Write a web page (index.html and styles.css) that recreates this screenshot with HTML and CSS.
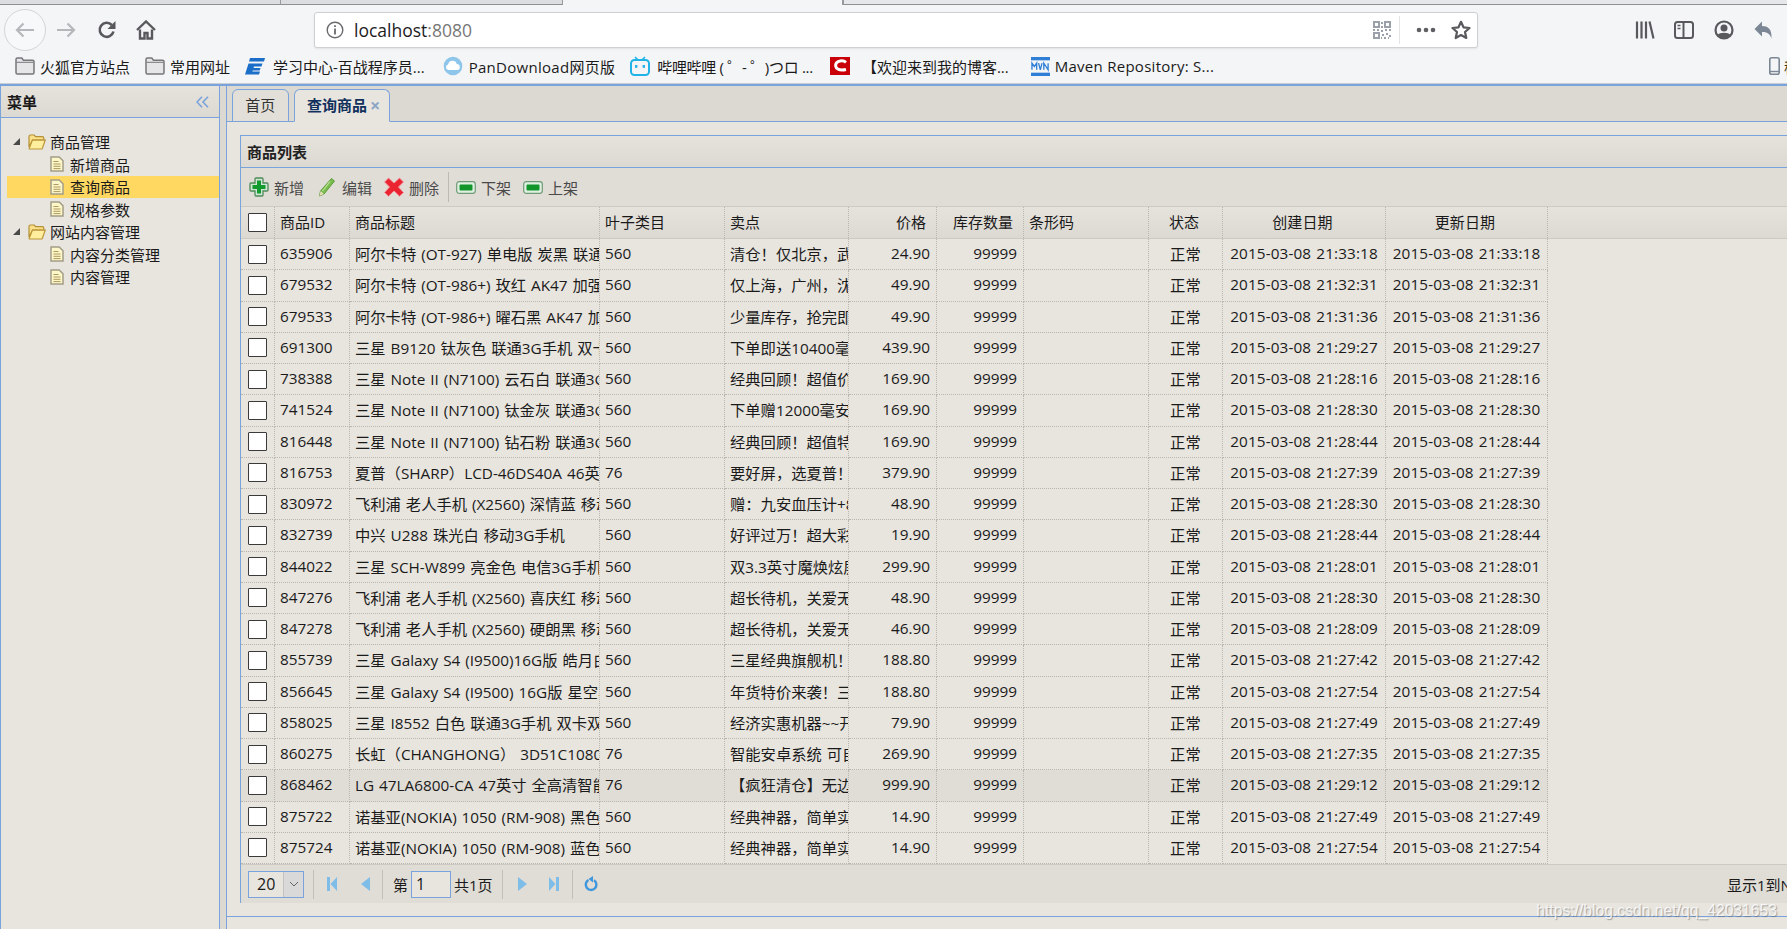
FILE: index.html
```html
<!DOCTYPE html>
<html lang="zh-CN">
<head>
<meta charset="utf-8">
<title>商品管理</title>
<link rel="stylesheet" href="styles.css">
</head>
<body>
<svg class="sprite" aria-hidden="true">
  <symbol id="i-folder-b" viewBox="0 0 20 18"><path d="M1 4V2.500C1 1.700 1.600 1 2.400 1h4.400l1.600 2.200h9.200c.8 0 1.400.6 1.400 1.400v10.900c0 .8-.6 1.500-1.400 1.500H2.400c-.8 0-1.400-.7-1.400-1.500z" fill="#e6e6e8" stroke="#77777b" stroke-width="1.500"/><path d="M1.500 5.300h17" stroke="#77777b"/></symbol>
  <symbol id="i-open" viewBox="0 0 18 16"><path d="M1 13V2.600C1 1.700 1.600 1 2.500 1h3.700l1.400 1.600h6.700c.9 0 1.500.7 1.500 1.500V6H4.600z" fill="#fbe08a" stroke="#b48f35" stroke-width="1.200"/><path d="M1.200 14.200 4.400 6.200h12.800l-2.800 8c-.2.5-.6.8-1.100.8H2c-.6 0-1-.4-.8-.8z" fill="#ffee9e" stroke="#bd9638" stroke-width="1.200"/></symbol>
  <symbol id="i-doc" viewBox="0 0 14 16"><path d="M1 1h8.200L13 4.800V15H1z" fill="#fdf6c8" stroke="#a39d88" stroke-width="1.500"/><path d="M3.500 5.500h5M3.500 8h7M3.500 10.300h7M3.500 12.600h7" stroke="#ad9a5c"/></symbol>
  <symbol id="i-add" viewBox="0 0 20 20"><path d="M7 1h6c.6 0 1 .4 1 1v4h4c.6 0 1 .4 1 1v6c0 .6-.4 1-1 1h-4v4c0 .6-.4 1-1 1H7c-.6 0-1-.4-1-1v-4H2c-.6 0-1-.4-1-1V7c0-.6.4-1 1-1h4V2c0-.6.4-1 1-1z" fill="#cfe6d2" stroke="#4f8a5a" stroke-width="1.300"/><path d="M8 3.500h4V8h4.500v4H12v4.500H8V12H3.500V8H8z" fill="#129a2e"/></symbol>
  <symbol id="i-edit" viewBox="0 0 18 20"><path d="M13.500 1.500 16.500 4 6 17 1.500 19 2.500 14z" fill="#79bd4f" stroke="#5c9a3a"/><path d="M2.500 14 6 17 1.500 19z" fill="#e5dcb8"/><path d="M12 4.500 4.500 14" stroke="#bfe39a" stroke-width="1.200"/></symbol>
  <symbol id="i-del" viewBox="0 0 20 20"><path d="M4.500 1 10 6 15.500 1 19.500 5 14.500 10 19.500 15.500 15.500 19.300 10 14 4.500 19.300.5 15.500 5.500 10 .5 5z" fill="#ea2430" stroke="#f29aa0" stroke-linejoin="round"/></symbol>
  <symbol id="i-green" viewBox="0 0 20 13"><rect x=".7" y=".7" width="18.600" height="11.600" rx="2.500" fill="#dff0e2" stroke="#6f9a76" stroke-width="1.200"/><rect x="3.500" y="3.500" width="13" height="6" rx="1" fill="#12952b"/></symbol>
  <symbol id="i-first" viewBox="0 0 10 14"><path d="M0 0h3v14H0zM10 0v14L3.500 7z" fill="#7fbde9"/></symbol>
  <symbol id="i-prev" viewBox="0 0 9 14"><path d="M9 0v14L0 7z" fill="#7fbde9"/></symbol>
  <symbol id="i-next" viewBox="0 0 9 14"><path d="M0 0v14l9-7z" fill="#7fbde9"/></symbol>
  <symbol id="i-last" viewBox="0 0 10 14"><path d="M7 0h3v14H7zM0 0v14l6.500-7z" fill="#7fbde9"/></symbol>
</svg>

<header class="browser">
  <div class="tabstrip">
    <div class="btab"></div>
    <div class="btab"></div>
    <div class="btab btab-active"></div>
    <div class="btab-rest"></div>
  </div>
  <nav class="navbar">
    <div class="back-circle">
      <svg class="ico20" viewBox="0 0 20 16"><path d="M19 8H2M8.500 1.500 2 8l6.500 6.500" fill="none" stroke="#b6b7ba" stroke-width="2.200"/></svg>
    </div>
    <svg class="ico20 nav-fwd" viewBox="0 0 20 16"><path d="M1 8h17M11.500 1.500 18 8l-6.500 6.500" fill="none" stroke="#b6b7ba" stroke-width="2.200"/></svg>
    <svg class="ico20 nav-reload" viewBox="0 0 20 20"><path d="M16.500 11.500A7 7 0 1 1 14.800 5" fill="none" stroke="#59595d" stroke-width="2.600"/><path d="M18.500 1v8h-8z" fill="#59595d"/></svg>
    <svg class="ico20 nav-home" viewBox="0 0 20 20"><path d="M1 10 10 1.500 19 10" fill="none" stroke="#59595d" stroke-width="2.400"/><path d="M4 9.500V18.500h4.500V13h3v5.500H16V9.500" fill="none" stroke="#59595d" stroke-width="2.400"/></svg>
    <div class="urlbar">
      <svg class="url-info" viewBox="0 0 18 18"><circle cx="9" cy="9" r="7.800" fill="none" stroke="#6a6a6e" stroke-width="1.400"/><path d="M9 7.500V13.500M9 4.200v1.800" stroke="#6a6a6e" stroke-width="1.800"/></svg>
      <span class="url-text">localhost<span class="url-port">:8080</span></span>
      <svg class="url-qr" viewBox="0 0 18 18"><path d="M0 0h7v7H0zM2 2v3h3V2zM11 0h7v7h-7zM13 2v3h3V2zM0 11h7v7H0zM2 13v3h3v-3z" fill="#9aa1ab" fill-rule="evenodd"/><path d="M8 1h2v2H8zM8 5h2v2H8zM0 8h2v2H0zM4 8h2v2H4zM8 9h2v2H8zM12 8h2v2h-2zM16 8h2v2h-2zM9 13h2v2H9zM13 12h2v2h-2zM16 14h2v2h-2zM11 16h2v2h-2zM8 16h1v2H8zM15 16h1v2h-1z" fill="#9aa1ab"/></svg>
      <span class="url-sep"></span>
      <svg class="url-dots" viewBox="0 0 20 6"><circle cx="3" cy="3" r="2.300" fill="#5f5f63"/><circle cx="10" cy="3" r="2.300" fill="#5f5f63"/><circle cx="17" cy="3" r="2.300" fill="#5f5f63"/></svg>
      <svg class="ico20 url-star" viewBox="0 0 20 20"><path d="M10 1.800 12.500 7.300 18.500 8 14 12 15.300 18 10 15 4.700 18 6 12 1.500 8 7.500 7.300z" fill="none" stroke="#59595d" stroke-width="2.200" stroke-linejoin="round"/></svg>
    </div>
    <div class="nav-right">
      <svg class="ico20" viewBox="0 0 20 20"><path d="M2 1.500v17M6.500 1.500v17M11 1.500v17M14.500 1.500l4 17" fill="none" stroke="#59595d" stroke-width="2.200"/></svg>
      <svg class="ico20" viewBox="0 0 20 20"><rect x="1" y="2" width="18" height="16" rx="2.500" fill="none" stroke="#59595d" stroke-width="2"/><path d="M9.500 2v16" stroke="#59595d" stroke-width="2"/><path d="M3.500 5.500h3M3.500 8.500h3" stroke="#59595d" stroke-width="1.400"/></svg>
      <svg class="ico20" viewBox="0 0 20 20"><circle cx="10" cy="10" r="8.500" fill="none" stroke="#59595d" stroke-width="2.200"/><circle cx="10" cy="8" r="3.500" fill="#59595d"/><path d="M3.500 15c2-3 11-3 13 0l-3 3h-7z" fill="#59595d"/></svg>
      <svg class="ico20" viewBox="0 0 20 20"><path d="M9 1.500V6C15 6 19 9 18.500 18.500 17 13.500 14 12 9 12v4.500L1.500 9z" fill="#7b8794"/></svg>
    </div>
  </nav>
  <div class="bookmarks">
    <a class="bm bm-1"><svg class="bm-ico"><use href="#i-folder-b"/></svg>火狐官方站点</a>
    <a class="bm bm-2"><svg class="bm-ico"><use href="#i-folder-b"/></svg>常用网址</a>
    <a class="bm bm-3"><svg class="bm-ico" viewBox="0 0 20 18"><path d="M5 1h15l-1 3.500H4zM3.500 6.500h14l-1 3H9l-.5 1.500h7l-.8 2.500H7.800L7.300 14.500H15L14 17.500H0z" fill="#1b6fc9"/></svg>学习中心-百战程序员...</a>
    <a class="bm bm-4"><svg class="bm-ico" viewBox="0 0 20 20"><circle cx="10" cy="10" r="9.300" fill="#8ec5ea"/><path d="M5.500 14a2.800 2.800 0 0 1-.4-5.500 4.500 4.500 0 0 1 8.700-.6A3.100 3.100 0 0 1 14.500 14z" fill="#fff"/></svg>PanDownload网页版</a>
    <a class="bm bm-5"><svg class="bm-ico" viewBox="0 0 20 20"><path d="M5 1l3 3M15 1l-3 3" stroke="#1fb3e8" stroke-width="1.600"/><rect x="1" y="4" width="18" height="15" rx="3.500" fill="none" stroke="#1fb3e8" stroke-width="2"/><rect x="5" y="9" width="2.400" height="2.800" fill="#1fb3e8"/><rect x="12.600" y="9" width="2.400" height="2.800" fill="#1fb3e8"/></svg>哔哩哔哩 ( ゜- ゜)つロ ...</a>
    <a class="bm bm-6"><svg class="bm-ico" viewBox="0 0 20 18"><rect width="20" height="18" fill="#c90008"/><path d="M16 5.300C14.500 4 12 3.500 10 4c-3.200.7-4.600 3-4.300 5.300.4 2.700 3.600 4.700 10.300 3.200" fill="none" stroke="#fff" stroke-width="3"/></svg>【欢迎来到我的博客...</a>
    <a class="bm bm-7"><svg class="bm-ico" viewBox="0 0 20 20"><rect y="0" width="20" height="3.500" fill="#2f7fd6"/><rect y="16.500" width="20" height="3.500" fill="#2f7fd6"/><path d="M1 13.500V6.500L3.500 10 6 6.500v7M8 6.500l1.800 7 1.800-7M13.500 13.500v-7l4.500 7v-7" fill="none" stroke="#2f7fd6" stroke-width="1.400"/></svg>Maven Repository: S...</a>
    <a class="bm bm-phone"><svg class="phone-ico" viewBox="0 0 11 18"><rect x=".8" y=".8" width="9.400" height="16.400" rx="1.800" fill="none" stroke="#7b8794" stroke-width="1.600"/><path d="M1 14.500h9" stroke="#7b8794" stroke-width="1.400"/></svg><span class="bm-move">移</span></a>
  </div>
</header>

<div class="app">
  <aside class="sidebar">
    <div class="side-head">
      <span class="side-title">菜单</span>
      <svg class="side-collapse" viewBox="0 0 13 12"><path d="M6 .7 1 6l5 5.300M12 .7 7 6l5 5.300" fill="none" stroke="#7aa3dc" stroke-width="1.600"/></svg>
    </div>
    <ul class="tree">
      <li class="node"><i class="arrow"></i><svg class="folder"><use href="#i-open"/></svg><span class="node-text">商品管理</span></li>
      <li class="leaf"><svg class="doc"><use href="#i-doc"/></svg><span class="leaf-text">新增商品</span></li>
      <li class="leaf leaf-selected"><svg class="doc"><use href="#i-doc"/></svg><span class="leaf-text">查询商品</span></li>
      <li class="leaf"><svg class="doc"><use href="#i-doc"/></svg><span class="leaf-text">规格参数</span></li>
      <li class="node"><i class="arrow"></i><svg class="folder"><use href="#i-open"/></svg><span class="node-text">网站内容管理</span></li>
      <li class="leaf"><svg class="doc"><use href="#i-doc"/></svg><span class="leaf-text">内容分类管理</span></li>
      <li class="leaf"><svg class="doc"><use href="#i-doc"/></svg><span class="leaf-text">内容管理</span></li>
    </ul>
  </aside>
  <div class="splitter"></div>
  <main class="main">
    <div class="tabbar">
      <div class="tab">首页</div>
      <div class="tab tab-active"><span>查询商品</span><span class="tab-close">×</span></div>
    </div>
    <div class="tabbody">
      <section class="panel">
        <div class="panel-head">商品列表</div>
        <div class="toolbar">
          <button class="tool tool-add"><svg class="t-ico"><use href="#i-add"/></svg>新增</button>
          <button class="tool tool-edit"><svg class="t-ico t-edit"><use href="#i-edit"/></svg>编辑</button>
          <button class="tool tool-del"><svg class="t-ico"><use href="#i-del"/></svg>删除</button>
          <span class="tool-sep"></span>
          <button class="tool tool-off"><svg class="t-ico t-green"><use href="#i-green"/></svg>下架</button>
          <button class="tool tool-on"><svg class="t-ico t-green"><use href="#i-green"/></svg>上架</button>
        </div>
        <div class="grid-head">
          <table class="grid">
            <colgroup><col class="c-ck"><col class="c-id"><col class="c-title"><col class="c-cat"><col class="c-sell"><col class="c-price"><col class="c-num"><col class="c-bar"><col class="c-st"><col class="c-date"><col class="c-date2"></colgroup>
            <tr><th class="ck"><input type="checkbox"></th><th>商品ID</th><th>商品标题</th><th>叶子类目</th><th>卖点</th><th class="r">价格</th><th class="r">库存数量</th><th>条形码</th><th class="m">状态</th><th class="m">创建日期</th><th class="m">更新日期</th></tr>
          </table>
        </div>
        <div class="grid-body">
          <table class="grid">
            <colgroup><col class="c-ck"><col class="c-id"><col class="c-title"><col class="c-cat"><col class="c-sell"><col class="c-price"><col class="c-num"><col class="c-bar"><col class="c-st"><col class="c-date"><col class="c-date2"></colgroup>
            <tr><td class="ck"><input type="checkbox"></td><td>635906</td><td>阿尔卡特 (OT-927) 单电版 炭黑 联通2G手机 双卡双待</td><td>560</td><td>清仓！仅北京，武汉仓有货！</td><td class="r">24.90</td><td class="r">99999</td><td></td><td class="m">正常</td><td class="m">2015-03-08 21:33:18</td><td class="m">2015-03-08 21:33:18</td></tr>
            <tr><td class="ck"><input type="checkbox"></td><td>679532</td><td>阿尔卡特 (OT-986+) 玫红 AK47 加强版 联通2G手机</td><td>560</td><td>仅上海，广州，沈阳仓有货！</td><td class="r">49.90</td><td class="r">99999</td><td></td><td class="m">正常</td><td class="m">2015-03-08 21:32:31</td><td class="m">2015-03-08 21:32:31</td></tr>
            <tr><td class="ck"><input type="checkbox"></td><td>679533</td><td>阿尔卡特 (OT-986+) 曜石黑 AK47 加强版 联通2G手机</td><td>560</td><td>少量库存，抢完即止！</td><td class="r">49.90</td><td class="r">99999</td><td></td><td class="m">正常</td><td class="m">2015-03-08 21:31:36</td><td class="m">2015-03-08 21:31:36</td></tr>
            <tr><td class="ck"><input type="checkbox"></td><td>691300</td><td>三星 B9120 钛灰色 联通3G手机 双卡双待</td><td>560</td><td>下单即送10400毫安移动电源！</td><td class="r">439.90</td><td class="r">99999</td><td></td><td class="m">正常</td><td class="m">2015-03-08 21:29:27</td><td class="m">2015-03-08 21:29:27</td></tr>
            <tr><td class="ck"><input type="checkbox"></td><td>738388</td><td>三星 Note II (N7100) 云石白 联通3G手机</td><td>560</td><td>经典回顾！超值价格值得拥有。</td><td class="r">169.90</td><td class="r">99999</td><td></td><td class="m">正常</td><td class="m">2015-03-08 21:28:16</td><td class="m">2015-03-08 21:28:16</td></tr>
            <tr><td class="ck"><input type="checkbox"></td><td>741524</td><td>三星 Note II (N7100) 钛金灰 联通3G手机</td><td>560</td><td>下单赠12000毫安移动电源</td><td class="r">169.90</td><td class="r">99999</td><td></td><td class="m">正常</td><td class="m">2015-03-08 21:28:30</td><td class="m">2015-03-08 21:28:30</td></tr>
            <tr><td class="ck"><input type="checkbox"></td><td>816448</td><td>三星 Note II (N7100) 钻石粉 联通3G手机</td><td>560</td><td>经典回顾！超值特惠！</td><td class="r">169.90</td><td class="r">99999</td><td></td><td class="m">正常</td><td class="m">2015-03-08 21:28:44</td><td class="m">2015-03-08 21:28:44</td></tr>
            <tr><td class="ck"><input type="checkbox"></td><td>816753</td><td>夏普（SHARP）LCD-46DS40A 46英寸 液晶电视</td><td>76</td><td>要好屏，选夏普！</td><td class="r">379.90</td><td class="r">99999</td><td></td><td class="m">正常</td><td class="m">2015-03-08 21:27:39</td><td class="m">2015-03-08 21:27:39</td></tr>
            <tr><td class="ck"><input type="checkbox"></td><td>830972</td><td>飞利浦 老人手机 (X2560) 深情蓝 移动3G手机</td><td>560</td><td>赠：九安血压计+8G内存卡</td><td class="r">48.90</td><td class="r">99999</td><td></td><td class="m">正常</td><td class="m">2015-03-08 21:28:30</td><td class="m">2015-03-08 21:28:30</td></tr>
            <tr><td class="ck"><input type="checkbox"></td><td>832739</td><td>中兴 U288 珠光白 移动3G手机</td><td>560</td><td>好评过万！超大彩屏！</td><td class="r">19.90</td><td class="r">99999</td><td></td><td class="m">正常</td><td class="m">2015-03-08 21:28:44</td><td class="m">2015-03-08 21:28:44</td></tr>
            <tr><td class="ck"><input type="checkbox"></td><td>844022</td><td>三星 SCH-W899 亮金色 电信3G手机 双卡双待</td><td>560</td><td>双3.3英寸魔焕炫屏，正品行货</td><td class="r">299.90</td><td class="r">99999</td><td></td><td class="m">正常</td><td class="m">2015-03-08 21:28:01</td><td class="m">2015-03-08 21:28:01</td></tr>
            <tr><td class="ck"><input type="checkbox"></td><td>847276</td><td>飞利浦 老人手机 (X2560) 喜庆红 移动3G手机</td><td>560</td><td>超长待机，关爱无限！</td><td class="r">48.90</td><td class="r">99999</td><td></td><td class="m">正常</td><td class="m">2015-03-08 21:28:30</td><td class="m">2015-03-08 21:28:30</td></tr>
            <tr><td class="ck"><input type="checkbox"></td><td>847278</td><td>飞利浦 老人手机 (X2560) 硬朗黑 移动3G手机</td><td>560</td><td>超长待机，关爱无限！</td><td class="r">46.90</td><td class="r">99999</td><td></td><td class="m">正常</td><td class="m">2015-03-08 21:28:09</td><td class="m">2015-03-08 21:28:09</td></tr>
            <tr><td class="ck"><input type="checkbox"></td><td>855739</td><td>三星 Galaxy S4 (I9500)16G版 皓月白 联通3G手机</td><td>560</td><td>三星经典旗舰机！</td><td class="r">188.80</td><td class="r">99999</td><td></td><td class="m">正常</td><td class="m">2015-03-08 21:27:42</td><td class="m">2015-03-08 21:27:42</td></tr>
            <tr><td class="ck"><input type="checkbox"></td><td>856645</td><td>三星 Galaxy S4 (I9500) 16G版 星空黑 联通3G手机</td><td>560</td><td>年货特价来袭！三星经典旗舰</td><td class="r">188.80</td><td class="r">99999</td><td></td><td class="m">正常</td><td class="m">2015-03-08 21:27:54</td><td class="m">2015-03-08 21:27:54</td></tr>
            <tr><td class="ck"><input type="checkbox"></td><td>858025</td><td>三星 I8552 白色 联通3G手机 双卡双待</td><td>560</td><td>经济实惠机器~~开春入手</td><td class="r">79.90</td><td class="r">99999</td><td></td><td class="m">正常</td><td class="m">2015-03-08 21:27:49</td><td class="m">2015-03-08 21:27:49</td></tr>
            <tr><td class="ck"><input type="checkbox"></td><td>860275</td><td>长虹（CHANGHONG） 3D51C1080i 液晶电视</td><td>76</td><td>智能安卓系统 可自由安装</td><td class="r">269.90</td><td class="r">99999</td><td></td><td class="m">正常</td><td class="m">2015-03-08 21:27:35</td><td class="m">2015-03-08 21:27:35</td></tr>
            <tr class="row-hover"><td class="ck"><input type="checkbox"></td><td>868462</td><td>LG 47LA6800-CA 47英寸 全高清智能电视</td><td>76</td><td>【疯狂清仓】无边框设计</td><td class="r">999.90</td><td class="r">99999</td><td></td><td class="m">正常</td><td class="m">2015-03-08 21:29:12</td><td class="m">2015-03-08 21:29:12</td></tr>
            <tr><td class="ck"><input type="checkbox"></td><td>875722</td><td>诺基亚(NOKIA) 1050 (RM-908) 黑色 移动2G手机</td><td>560</td><td>经典神器，简单实用！</td><td class="r">14.90</td><td class="r">99999</td><td></td><td class="m">正常</td><td class="m">2015-03-08 21:27:49</td><td class="m">2015-03-08 21:27:49</td></tr>
            <tr><td class="ck"><input type="checkbox"></td><td>875724</td><td>诺基亚(NOKIA) 1050 (RM-908) 蓝色 移动2G手机</td><td>560</td><td>经典神器，简单实用！</td><td class="r">14.90</td><td class="r">99999</td><td></td><td class="m">正常</td><td class="m">2015-03-08 21:27:54</td><td class="m">2015-03-08 21:27:54</td></tr>
          </table>
        </div>
        <div class="pager">
          <div class="pg-select"><span class="pg-value">20</span><span class="pg-drop"><svg class="pg-chev" viewBox="0 0 10 6"><path d="M1 1l4 4 4-4" fill="none" stroke="#666" stroke-width="1"/></svg></span></div>
          <span class="pg-sep pg-sep-1"></span>
          <svg class="pg-ico pg-first"><use href="#i-first"/></svg>
          <svg class="pg-ico pg-prev"><use href="#i-prev"/></svg>
          <span class="pg-sep pg-sep-2"></span>
          <span class="pg-label">第</span>
          <span class="pg-input">1</span>
          <span class="pg-total">共1页</span>
          <span class="pg-sep pg-sep-3"></span>
          <svg class="pg-ico pg-next"><use href="#i-next"/></svg>
          <svg class="pg-ico pg-last"><use href="#i-last"/></svg>
          <span class="pg-sep pg-sep-4"></span>
          <svg class="pg-refresh" viewBox="0 0 14 16"><path d="M10 4.200a5.300 5.300 0 1 1-5.500-.2" fill="none" stroke="#3d97dc" stroke-width="2.400"/><path d="M9 0v6.500L4.500 3z" fill="#3d97dc"/></svg>
          <span class="pg-info">显示1到NaN,共NaN记录</span>
        </div>
      </section>
    </div>
  </main>
</div>
<div class="watermark">https://blog.csdn.net/qq_42031653</div>
</body>
</html>
```

FILE: styles.css
```css
* { box-sizing: border-box; }
html, body { margin: 0; height: 929px; overflow: hidden; }
body {
  position: relative;
  width: 1787px;
  background: #e8e5df;
  color: #1a1a1a;
  font-family: "Open Sans", "Noto Sans CJK SC", sans-serif;
  font-size: 15.300px;
  word-spacing: 1px;
}
.sprite { position: absolute; width: 0; height: 0; }

/* browser chrome */
.browser { height: 84px; background: #f4f5f7; border-bottom: 1px solid #c9ccd2; }
.tabstrip { display: flex; height: 5px; }
.btab { width: 281px; background: #dcdde1; border-right: 1px solid #9a9a9e; border-bottom: 1px solid #8f8f93; }
.btab:nth-child(2) { width: 282px; }
.btab-active { width: 280px; background: #f4f5f7; border-bottom: 0; }
.btab-rest { flex: 1; background: #e6e7ea; border-left: 1px solid #9a9a9e; border-bottom: 1px solid #8f8f93; }

.navbar { display: flex; align-items: center; height: 45px; padding: 5px 14px 0 4px; }
.ico20 { width: 20px; height: 20px; flex: none; display: block; }
.back-circle {
  width: 42px; height: 42px; flex: none;
  display: flex; align-items: center; justify-content: center;
  border: 1px solid #d4d5d8; border-radius: 50%; background: #f7f8f9;
}
.nav-fwd { margin-left: 10px; }
.nav-reload { margin-left: 21px; }
.nav-home { margin-left: 19px; }
.urlbar {
  width: 1164px; height: 36px; margin-left: 158px; flex: none;
  display: flex; align-items: center; padding-left: 11px;
  background: #fff; border: 1px solid #cfd0d3; border-radius: 3px;
  box-shadow: 0 1px 2px rgba(0,0,0,.08);
}
.url-info { width: 18px; height: 18px; flex: none; }
.url-text { margin-left: 10px; font-size: 17.500px; color: #1c1c1e; }
.url-port { color: #777; }
.url-qr { width: 18px; height: 18px; margin-left: auto; }
.url-sep { width: 1px; height: 28px; margin-left: 8px; background: #e3e3e5; }
.url-dots { width: 20px; height: 6px; margin-left: 16px; }
.url-star { margin-left: 15px; margin-right: 6px; }
.nav-right { display: flex; gap: 19.500px; margin-left: auto; }

.bookmarks { display: flex; align-items: center; height: 34px; padding: 0 0 2px 15px; font-size: 15px; word-spacing: 0; white-space: nowrap; }
.bm { display: flex; align-items: center; color: #1a1a1a; }
.bm-ico { width: 20px; height: 18px; flex: none; margin-right: 5px; }
.bm-2 { margin-left: 15px; }
.bm-3 { margin-left: 15px; }
.bm-3 .bm-ico { margin-right: 8px; }
.bm-4 { margin-left: 18px; letter-spacing: .28px; }
.bm-4 .bm-ico { height: 20px; margin-right: 6px; }
.bm-5 { margin-left: 15px; letter-spacing: -.3px; }
.bm-5 .bm-ico { height: 20px; margin-right: 7px; }
.bm-6 { margin-left: 17px; }
.bm-6 .bm-ico { margin-right: 12px; }
.bm-7 { margin-left: 22px; letter-spacing: .27px; }
.bm-7 .bm-ico { width: 19px; height: 19px; margin-right: 5px; }
.bm-phone { margin-left: auto; margin-right: -12px; }
.phone-ico { width: 11px; height: 18px; flex: none; margin-right: 4px; }
.bm-move { color: #3a2a10; }

/* app frame */
.app { display: flex; height: 845px; border-top: 2px solid #7aa3dc; }
.sidebar { width: 220px; flex: none; background: #e8e5df; border-left: 1px solid #7aa3dc; border-right: 1px solid #7aa3dc; }
.side-head {
  display: flex; align-items: center; justify-content: space-between;
  height: 32px; padding: 0 10px 0 6px;
  background: linear-gradient(#e6e3dd, #dcd8d2);
  border-bottom: 1px solid #7aa3dc;
}
.side-title { font-weight: 700; font-size: 15px; }
.side-collapse { width: 13px; height: 12px; }
.tree { list-style: none; margin: 0; padding: 12.500px 0 0 6px; }
.node, .leaf { display: flex; align-items: center; height: 22.500px; white-space: nowrap; font-size: 15px; }
.arrow { width: 0; height: 0; margin-left: 6px; border-style: solid; border-width: 0 0 7px 7px; border-color: transparent transparent #4a4a4a transparent; }
.folder { width: 18px; height: 16px; margin-left: 8px; flex: none; }
.node-text { margin-left: 4px; }
.leaf { padding-left: 43px; }
.doc { width: 14px; height: 16px; flex: none; }
.leaf-text { margin-left: 6px; }
.leaf-selected { background: #ffd862; }
.splitter { width: 6px; flex: none; background: #dcd8d2; }

/* main */
.main { flex: 1; min-width: 0; border-left: 1px solid #7aa3dc; }
.tabbar {
  display: flex; align-items: flex-end; gap: 5.500px;
  height: 36px; padding-left: 5px;
  background: #dcd8d2; border-bottom: 1px solid #7aa3dc;
}
.tab {
  width: 56.500px; height: 33px; margin-bottom: -1px; padding-bottom: 2px;
  display: flex; align-items: center; justify-content: center;
  background: #e2dfd9; border: 1px solid #7aa3dc;
  border-radius: 6px 6px 0 0; font-size: 15px; color: #333;
}
.tab-active {
  width: 96px; justify-content: flex-start; padding-left: 12px;
  background: #e8e5df; border-bottom-color: #e8e5df;
  font-weight: 700; color: #12305c;
}
.tab-close { margin-left: 3px; font-weight: 700; font-size: 18px; line-height: 18px; color: #8ea6c6; }
.tabbody { height: 795px; padding: 13px 0 0 13px; border-bottom: 1px solid #7aa3dc; overflow: hidden; }

.panel { width: 1648px; height: 768px; border: 1px solid #7aa3dc; background: #e8e5df; }
.panel-head {
  height: 32px; padding-left: 6px; line-height: 32px;
  background: linear-gradient(#e6e3dd, #dcd8d2);
  border-bottom: 1px solid #7aa3dc;
  font-size: 15px; font-weight: 700; color: #222;
}
.toolbar { display: flex; align-items: center; height: 39px; background: #e0dcd6; border-bottom: 1px solid #cdcac3; }
.tool {
  display: flex; align-items: center; gap: 5px; padding: 0; border: 0; background: none;
  font: inherit; font-size: 15px; color: #4a4a4a;
}
.t-ico { width: 20px; height: 20px; flex: none; }
.t-edit { width: 18px; margin-right: 1px; }
.t-green { height: 13px; }
.tool-add { margin-left: 8px; }
.tool-edit { margin-left: 14px; }
.tool-del { margin-left: 12px; }
.tool-sep { width: 1px; height: 30px; margin-left: 9px; background: #bdbab3; }
.tool-off { margin-left: 7px; }
.tool-on { margin-left: 12px; }

/* grid */
.grid-head { height: 32px; background: linear-gradient(#e6e3dd, #dcd8d2); border-bottom: 1px solid #cdcac3; }
.grid { border-collapse: separate; border-spacing: 0; table-layout: fixed; width: 1307px; }
.c-ck { width: 34px; }
.c-id { width: 75px; }
.c-title { width: 250px; }
.c-cat { width: 125px; }
.c-sell { width: 124px; }
.c-price { width: 88px; }
.c-num { width: 87px; }
.c-bar { width: 125px; }
.c-st { width: 74px; }
.c-date { width: 163px; }
.c-date2 { width: 162px; }
.grid th, .grid td {
  padding: 0 0 2px 5px; overflow: hidden; white-space: nowrap;
  border-right: 1px dotted #b9b6af; text-align: left; font-weight: 400;
}
.grid th { height: 31px; font-size: 15px; }
.grid td { height: 31.250px; border-bottom: 1px dotted #b9b6af; }
.grid .r { text-align: right; padding: 0 6px 2px 0; }
.grid th.r { padding-right: 10px; }
.grid .m { text-align: center; padding: 0 0 2px; letter-spacing: .12px; }
.grid th.m { padding-right: 3px; }
.grid .ck { padding: 0; text-align: center; }
.grid input {
  appearance: none; display: block; width: 19px; height: 19px; margin: 0 0 0 7px;
  background: #fff; border: 1.500px solid #3a3a3a; border-radius: 1px;
}
.row-hover td { background: #e0ddd7; }
.grid-body { height: 625px; }

/* pager */
.pager {
  display: flex; align-items: center; height: 39px; padding-left: 7px;
  background: #e0dcd6; border-top: 1px solid #cdcac3; white-space: nowrap;
}
.pg-select { display: flex; width: 56px; height: 27px; border: 1px solid #7aa3dc; background: #e8e5df; }
.pg-value { width: 34px; padding-left: 8px; line-height: 25px; font-size: 16px; }
.pg-drop { flex: 1; display: flex; align-items: center; justify-content: center; background: #d9d9d9; border-left: 1px solid #c2c2c2; }
.pg-chev { width: 10px; height: 6px; }
.pg-sep { width: 1px; height: 29px; background: #c2bfb8; flex: none; }
.pg-sep-1 { margin-left: 9px; }
.pg-sep-2 { margin-left: 12px; }
.pg-sep-3 { margin-left: 9px; }
.pg-sep-4 { margin-left: 13px; }
.pg-ico { height: 14px; flex: none; }
.pg-first { width: 10px; margin-left: 13px; }
.pg-prev { width: 9px; margin-left: 24px; }
.pg-next { width: 9px; margin-left: 15px; }
.pg-last { width: 10px; margin-left: 22px; }
.pg-label { margin-left: 10px; font-size: 15px; }
.pg-input { width: 40px; height: 27px; margin-left: 3px; padding-left: 4px; line-height: 25px; border: 1px solid #7aa3dc; background: #e8e5df; font-size: 16px; }
.pg-total { margin-left: 3px; font-size: 15px; }
.pg-refresh { width: 14px; height: 16px; margin-left: 11px; flex: none; }
.pg-info { margin-left: auto; width: 160px; font-size: 15px; }

.watermark {
  position: absolute; right: 10px; bottom: 9px;
  font-family: "Liberation Sans", sans-serif; font-size: 15.700px; word-spacing: 0;
  color: rgba(255,255,255,.8); text-shadow: 1px 1px 1px rgba(90,90,90,.5);
}
```
